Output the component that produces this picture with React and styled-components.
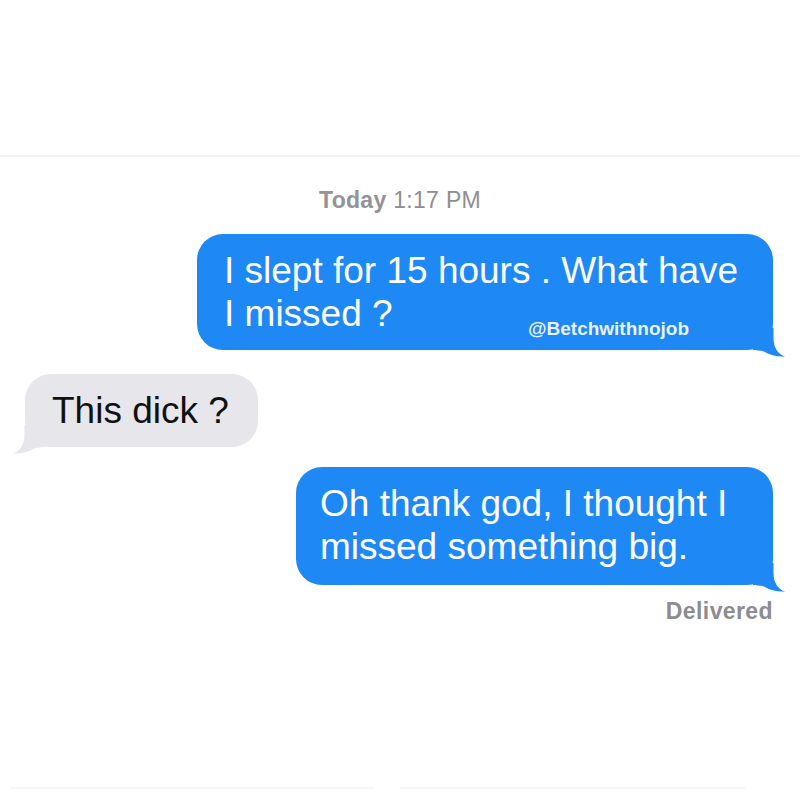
import React from 'react';
import styled, { createGlobalStyle } from 'styled-components';

const GlobalStyle = createGlobalStyle`
  html, body {
    margin: 0;
    padding: 0;
    background: #ffffff;
  }
  body {
    font-family: "Liberation Sans", Arial, sans-serif;
  }
`;

const Page = styled.div`
  width: 800px;
  height: 800px;
  display: flex;
  flex-direction: column;
  padding-top: 155px;
  box-sizing: border-box;
  overflow: hidden;
`;

const Divider = styled.div`
  height: 2px;
  background: #f3f3f3;
`;

const Timestamp = styled.div`
  margin-top: 29px;
  text-align: center;
  font-size: 23px;
  line-height: 28px;
  color: #8e8e93;
  letter-spacing: 0.3px;

  b {
    font-weight: 700;
    color: #939398;
  }
`;

const Thread = styled.div`
  display: flex;
  flex-direction: column;
  margin-top: 20px;
  padding: 0 27px 0 25px;
`;

const Row = styled.div`
  display: flex;
  justify-content: ${(p) => (p.$out ? 'flex-end' : 'flex-start')};
  margin-top: ${(p) => p.$gap || 0}px;
`;

const Bubble = styled.div`
  position: relative;
  box-sizing: border-box;
  width: ${(p) => (p.$w ? `${p.$w}px` : 'auto')};
  padding: 15px ${(p) => p.$pr || 28}px ${(p) => p.$pb || 15}px ${(p) => p.$pl || 26}px;
  border-radius: 26px;
  background: ${(p) => (p.$out ? '#1e88f5' : '#e6e6eb')};
  color: ${(p) => (p.$out ? '#ffffff' : '#111111')};
  font-size: 37px;
  line-height: 43px;
  white-space: nowrap;
`;

const Tail = styled.svg`
  position: absolute;
  bottom: -8px;
  width: 34px;
  height: 30px;
  ${(p) => (p.$out ? 'right: -14px;' : 'left: -14px; transform: scaleX(-1);')}
`;

const Watermark = styled.span`
  position: absolute;
  left: 331px;
  top: 84px;
  font-size: 19px;
  line-height: 22px;
  font-weight: 700;
  color: rgba(255, 255, 255, 0.92);
`;

const Status = styled.div`
  margin-top: 12px;
  text-align: right;
  font-size: 23px;
  line-height: 28px;
  font-weight: 700;
  letter-spacing: 0.4px;
  color: #8c8c91;
`;

const Footer = styled.div`
  margin-top: auto;
  margin-bottom: 11px;
  display: flex;
  gap: 25px;
  padding: 0 55px 0 10px;
`;

const FooterLine = styled.div`
  flex: ${(p) => p.$grow};
  height: 2px;
  background: #f6f6f6;
`;

function BubbleTail({ out, color }) {
  return (
    <Tail $out={out} viewBox="0 0 34 30">
      <path
        d="M0 0 H20.5 V10 C20.5 20 25 26 32 28.5 C25 29 17 27.5 11 23.5 C7 22.5 3 22 0 22 Z"
        fill={color}
      />
    </Tail>
  );
}

export default function App() {
  return (
    <>
      <GlobalStyle />
      <Page>
        <Divider />
        <Timestamp>
          <b>Today</b> 1:17 PM
        </Timestamp>
        <Thread>
          <Row $out>
            <Bubble $out $w={576} $pl={27}>
              I slept for 15 hours . What have
              <br />I missed ?
              <Watermark>@Betchwithnojob</Watermark>
              <BubbleTail out color="#1e88f5" />
            </Bubble>
          </Row>
          <Row $gap={24}>
            <Bubble $pl={27} $pr={29}>
              This dick ?
              <BubbleTail color="#e6e6eb" />
            </Bubble>
          </Row>
          <Row $out $gap={20}>
            <Bubble $out $w={477} $pl={24} $pb={17}>
              Oh thank god, I thought I
              <br />
              missed something big.
              <BubbleTail out color="#1e88f5" />
            </Bubble>
          </Row>
          <Status>Delivered</Status>
        </Thread>
        <Footer>
          <FooterLine $grow={365} />
          <FooterLine $grow={345} />
        </Footer>
      </Page>
    </>
  );
}
